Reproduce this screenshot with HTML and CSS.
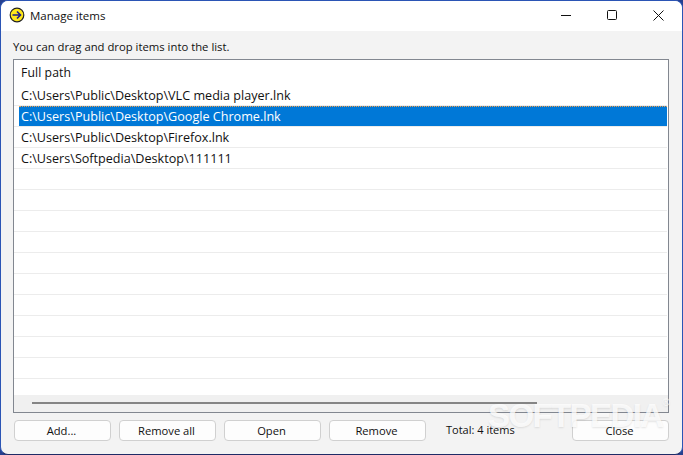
FILE: index.html
```html
<!DOCTYPE html>
<html lang="en">
<head>
<meta charset="utf-8">
<title>Manage items</title>
<link rel="stylesheet" href="styles.css">
</head>
<body>
<div class="window">
  <header class="titlebar">
    <svg class="app-icon" width="16" height="16" viewBox="0 0 16 16"><circle cx="8" cy="8" r="6.8" fill="#ffe81a" stroke="#222" stroke-width="1.2"/><path d="M3.5 8h8M8 4.5 11.5 8 8 11.5" fill="none" stroke="#1c1c8c" stroke-width="1.6"/></svg>
    <span class="title">Manage items</span>
    <div class="caption">
      <svg width="11" height="11" viewBox="0 0 11 11"><path d="M0 5.5h10" stroke="#111" stroke-width="1"/></svg>
      <svg width="11" height="11" viewBox="0 0 11 11"><rect x=".5" y=".5" width="9" height="9" rx="1" fill="none" stroke="#111"/></svg>
      <svg width="11" height="11" viewBox="0 0 11 11"><path d="M.5.5l10 10M10.5.5l-10 10" stroke="#111"/></svg>
    </div>
  </header>
  <main class="body">
    <p class="hint">You can drag and drop items into the list.</p>
    <div class="list">
      <div class="head">Full path</div>
      <div class="row"><div class="cell">C:\Users\Public\Desktop\VLC media player.lnk</div></div>
      <div class="row"><div class="cell selected">C:\Users\Public\Desktop\Google Chrome.lnk</div></div>
      <div class="row"><div class="cell">C:\Users\Public\Desktop\Firefox.lnk</div></div>
      <div class="row"><div class="cell">C:\Users\Softpedia\Desktop\111111</div></div>
      <div class="row"></div><div class="row"></div><div class="row"></div><div class="row"></div><div class="row"></div>
      <div class="row"></div><div class="row"></div><div class="row"></div><div class="row"></div><div class="row"></div>
      <div class="spacer"></div>
      <div class="scroll"><div class="thumb"></div></div>
    </div>
    <footer class="actions">
      <button class="btn">Add...</button>
      <button class="btn">Remove all</button>
      <button class="btn">Open</button>
      <button class="btn">Remove</button>
      <span class="total">Total: 4 items</span>
      <button class="btn close">Close</button>
    </footer>
  </main>
  <div class="watermark">SOFTPEDIA<sup class="reg">®</sup></div>
</div>
</body>
</html>
```
FILE: styles.css
```css
* { box-sizing: border-box; }
html, body { margin: 0; height: 100%; }
body { background: #26408f; font-family: "Open Sans", "Noto Sans", sans-serif; font-size: 11.3px; color: #111; overflow: hidden; }
.window { position: relative; width: 683px; height: 455px; display: flex; flex-direction: column; border: 1px solid #2b55b5; border-bottom-color: #1e2b66; border-radius: 8px; overflow: hidden; background: #f3f3f3; }
.titlebar { height: 30px; flex: none; background: #fff; display: flex; align-items: center; padding: 0 0 2px 8px; }
.app-icon { flex: none; }
.title { margin-left: 5px; font-size: 11.5px; }
.caption { margin-left: auto; display: flex; gap: 35px; padding-right: 18px; }
.body { flex: 1; display: flex; flex-direction: column; padding: 0 13px 0 12px; min-height: 0; }
.hint { margin: 8px 0 4px; line-height: 16px; }
.list { height: 354px; flex: none; background: #fff; border: 1px solid #828790; display: flex; flex-direction: column; font-size: 12.6px; overflow: hidden; }
.head { height: 25px; flex: none; padding: 4px 0 0 7px; line-height: 18px; font-size: 12.2px; letter-spacing: .1px; }
.row { height: 21px; flex: none; margin-right: 1px; padding-left: 5px; border-bottom: 1px solid #ececec; }
.cell { height: 20px; padding-left: 2px; line-height: 21px; white-space: nowrap; }
.cell.selected { background: #0078d7; color: #fff; border-top: 1px dotted #f0a050; line-height: 20px; }
.spacer { flex: 1; min-height: 0; }
.scroll { height: 17px; flex: none; background: #f0f0f0; padding: 7px 0 0 18px; }
.thumb { width: 505px; height: 2px; background: #858585; }
.actions { display: flex; align-items: center; margin-top: 7px; font-size: 11.2px; }
.btn { width: 97px; height: 21px; padding: 0 2px 0 0; background: #fdfdfd; border: 1px solid #d0d0d0; border-radius: 4px; font: inherit; color: inherit; margin: 0 8px 0 1px; }
.btn + .btn { margin-left: 0; }
.total { margin: 0 0 2px 12px; font-size: 11px; }
.close { margin: 0 0 0 auto; }
.watermark { position: absolute; left: 487px; top: 396px; font: bold 33px "Liberation Sans", sans-serif; letter-spacing: -1.6px; color: rgba(255, 255, 255, .8); text-shadow: 0 1px 2px rgba(0, 0, 0, .1); white-space: nowrap; pointer-events: none; }
.reg { font-size: 10px; vertical-align: top; font-weight: normal; letter-spacing: 0; }
```
